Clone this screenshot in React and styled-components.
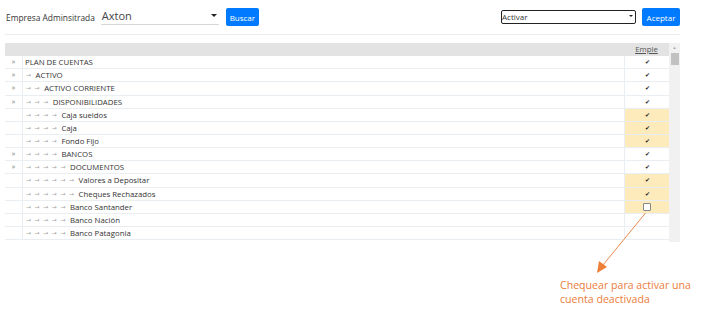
import styled, { createGlobalStyle } from 'styled-components'

const GlobalStyle = createGlobalStyle`
  body {
    margin: 0;
    background: #ffffff;
    font-family: "Open Sans", "Noto Sans", sans-serif;
    color: #333333;
  }
`;

const accounts = [
  { level: 0, name: 'PLAN DE CUENTAS', group: true, state: 'check' },
  { level: 1, name: 'ACTIVO', group: true, state: 'check' },
  { level: 2, name: 'ACTIVO CORRIENTE', group: true, state: 'check' },
  { level: 3, name: 'DISPONIBILIDADES', group: true, state: 'check' },
  { level: 4, name: 'Caja sueldos', state: 'check', mark: true },
  { level: 4, name: 'Caja', state: 'check', mark: true },
  { level: 4, name: 'Fondo Fijo', state: 'check', mark: true },
  { level: 4, name: 'BANCOS', group: true, state: 'check' },
  { level: 5, name: 'DOCUMENTOS', group: true, state: 'check' },
  { level: 6, name: 'Valores a Depositar', state: 'check', mark: true },
  { level: 6, name: 'Cheques Rechazados', state: 'check', mark: true },
  { level: 5, name: 'Banco Santander', state: 'box', mark: true },
  { level: 5, name: 'Banco Nación' },
  { level: 5, name: 'Banco Patagonia' },
];

export default function App() {
  return (
    <>
      <GlobalStyle />
      <Page>
        <TopBar>
          <Group>
            <Label>Empresa Adminsitrada</Label>
            <UnderSelect>
              <span>Axton</span>
              <Caret />
            </UnderSelect>
            <Button>Buscar</Button>
          </Group>
          <Group>
            <BoxSelect>
              <span>Activar</span>
              <Caret small />
            </BoxSelect>
            <Button wide>Aceptar</Button>
          </Group>
        </TopBar>
        <Rule />
        <Grid>
          <TableArea>
            <HeadRow>
              <MarkCell />
              <NameCell />
              <EmpleHead>Emple</EmpleHead>
            </HeadRow>
            {accounts.map((a, i) => (
              <Row key={i}>
                <MarkCell>{a.group ? '»' : ''}</MarkCell>
                <NameCell>
                  {Array.from({ length: a.level }, (_, k) => (
                    <Arrow key={k}>→</Arrow>
                  ))}
                  <Name indented={a.level > 0}>{a.name}</Name>
                </NameCell>
                <EmpleCell mark={a.mark}>
                  {a.state === 'check' && <Check>✔</Check>}
                  {a.state === 'box' && <Box />}
                </EmpleCell>
              </Row>
            ))}
          </TableArea>
          <Scrollbar>
            <ScrollArrow>▲</ScrollArrow>
            <Thumb />
          </Scrollbar>
        </Grid>
        <Note>
          Chequear para activar una
          <br />
          cuenta deactivada
        </Note>
        <Pointer width="715" height="315" viewBox="0 0 715 315">
          <line x1="645.5" y1="213" x2="603" y2="265" stroke="#ee8a4c" strokeWidth="1" />
          <polygon points="597,273 599,261 607,267" fill="#ee7f38" />
        </Pointer>
      </Page>
    </>
  )
}

const Page = styled.div`
  position: relative;
  width: 715px;
  height: 315px;
  padding: 0 5px;
  box-sizing: border-box;
`;

const TopBar = styled.div`
  display: flex;
  justify-content: space-between;
  align-items: center;
  width: 675px;
  padding-top: 7px;
  height: 27px;
  box-sizing: border-box;
`;

const Group = styled.div`
  display: flex;
  align-items: center;
  height: 18px;
`;

const Label = styled.span`
  font-size: 8.4px;
  margin-left: 1px;
  color: #333333;
`;

const UnderSelect = styled.div`
  display: flex;
  justify-content: space-between;
  align-items: center;
  width: 118px;
  height: 16px;
  margin-left: 6px;
  box-sizing: border-box;
  border-bottom: 1px solid #d6d6d6;
  padding: 0 2px 2px 1px;
  font-size: 11px;
  color: #444444;
`;

const Caret = styled.span`
  width: 0;
  height: 0;
  border-left: ${p => (p.small ? 2 : 3)}px solid transparent;
  border-right: ${p => (p.small ? 2 : 3)}px solid transparent;
  border-top: ${p => (p.small ? 2 : 3)}px solid #222222;
`;

const Button = styled.button`
  height: 18px;
  width: ${p => (p.wide ? 38 : 33)}px;
  margin-left: ${p => (p.wide ? 6 : 7)}px;
  padding: 0;
  border: none;
  border-radius: 2px;
  background: #007bff;
  color: #ffffff;
  font-family: "Open Sans", "Noto Sans", sans-serif;
  font-size: 8px;
`;

const BoxSelect = styled.div`
  display: flex;
  justify-content: space-between;
  align-items: center;
  width: 135px;
  height: 14px;
  box-sizing: border-box;
  border: 1px solid #222222;
  border-radius: 2px;
  padding: 0 2px 2px 0;
  font-size: 8px;
  color: #333333;
`;

const Rule = styled.div`
  width: 675px;
  border-top: 1px solid #ececec;
  margin-top: 7px;
`;

const Grid = styled.div`
  display: flex;
  width: 675px;
  margin-top: 8px;
`;

const TableArea = styled.div`
  width: 664px;
  display: flex;
  flex-direction: column;
`;

const RowBase = styled.div`
  display: flex;
  height: 13.15px;
  box-sizing: border-box;
  font-size: 7.8px;
  line-height: 12px;
`;

const HeadRow = styled(RowBase)`
  background: #e3e3e3;
`;

const Row = styled(RowBase)`
  border-bottom: 1px solid #e8eef2;
`;

const MarkCell = styled.div`
  width: 17px;
  flex: none;
  text-align: center;
  color: #777777;
  font-size: 7px;
  border-right: 1px solid #e8eef2;
  ${HeadRow} & {
    border-right: none;
  }
`;

const NameCell = styled.div`
  flex: 1;
  display: flex;
  padding-left: 2px;
  color: #333333;
  white-space: nowrap;
`;

const Arrow = styled.span`
  display: inline-block;
  width: 8.6px;
  padding-left: 1px;
  box-sizing: border-box;
  font-family: "DejaVu Sans", sans-serif;
  font-size: 6px;
  color: #a8a8a8;
  overflow: visible;
`;

const Name = styled.span`
  margin-left: ${p => (p.indented ? 2 : 0)}px;
`;

const EmpleHead = styled.div`
  width: 45px;
  flex: none;
  text-align: center;
  text-decoration: underline;
  color: #555555;
`;

const EmpleCell = styled.div`
  width: 45px;
  flex: none;
  display: flex;
  justify-content: center;
  align-items: center;
  box-sizing: border-box;
  border-left: 1px solid #e8eef2;
  background: ${p => (p.mark ? '#fdebbb' : '#ffffff')};
`;

const Check = styled.span`
  font-size: 6px;
  color: #222222;
`;

const Box = styled.span`
  width: 6px;
  height: 6px;
  border: 1px solid #888888;
  border-radius: 1px;
  background: #ffffff;
`;

const Scrollbar = styled.div`
  width: 11px;
  height: 199px;
  background: #f1f1f1;
  display: flex;
  flex-direction: column;
  align-items: center;
`;

const ScrollArrow = styled.span`
  font-size: 4px;
  color: #a3a3a3;
  line-height: 10px;
`;

const Thumb = styled.div`
  width: 8px;
  height: 12px;
  background: #c1c1c1;
`;

const Note = styled.div`
  margin: 36px 0 0 555px;
  font-size: 10.6px;
  line-height: 14px;
  color: #ea7d3b;
`;

const Pointer = styled.svg`
  position: absolute;
  left: 0;
  top: 0;
  pointer-events: none;
`;
